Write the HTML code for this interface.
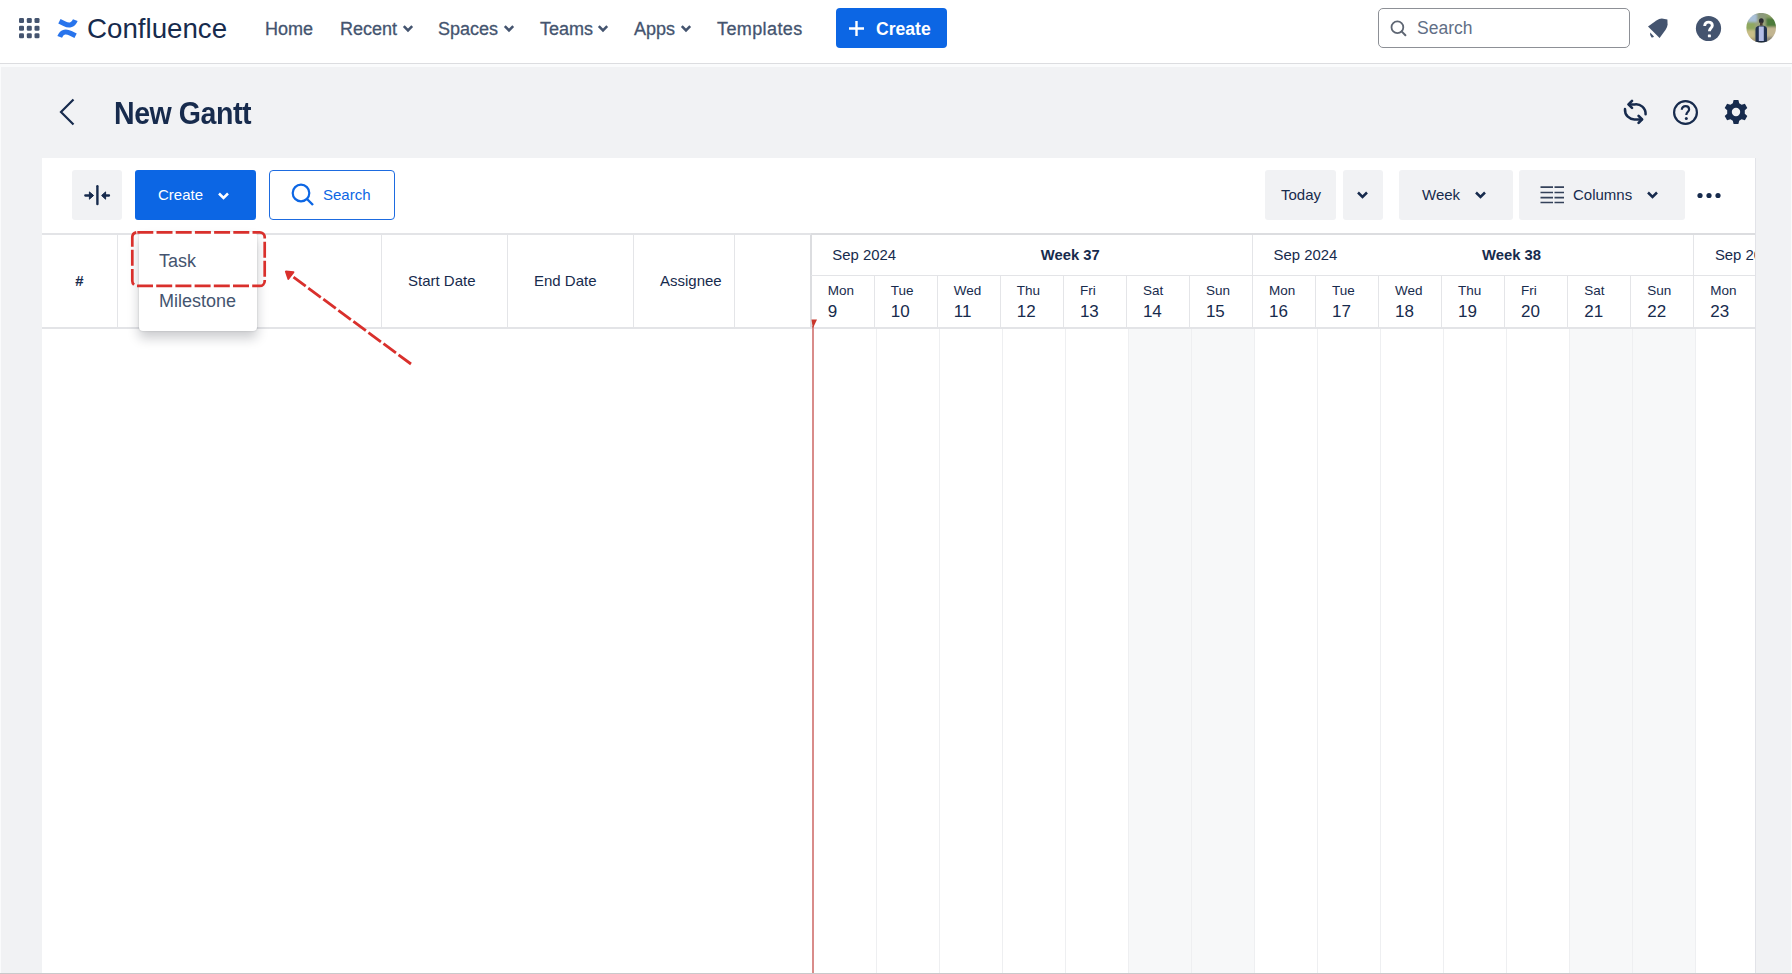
<!DOCTYPE html>
<html><head><meta charset="utf-8">
<style>
*{margin:0;padding:0;box-sizing:border-box}
html,body{width:1792px;height:974px;overflow:hidden;background:#f1f2f4;font-family:"Liberation Sans",sans-serif;color:#172b4d}
.abs{position:absolute}
.t{position:absolute;white-space:nowrap;line-height:1}
#hdr{position:absolute;left:0;top:0;width:1792px;height:63px;background:#fff}
#hdrb{position:absolute;left:0;top:63px;width:1792px;height:1px;background:#dcdde0}
#hdrw{position:absolute;left:0;top:64px;width:1792px;height:3px;background:#fafbfc}
#ledge{position:absolute;left:0;top:64px;width:1px;height:910px;background:#fafbfc}
#redge{position:absolute;left:1791px;top:64px;width:1px;height:910px;background:#fafbfc}
.nav{font-size:18px;color:#44546f;top:19.5px!important;-webkit-text-stroke:0.3px #44546f}
#panel{position:absolute;left:42px;top:158px;width:1713px;height:816px;background:#fff}
#pedge{position:absolute;left:1755px;top:158px;width:1px;height:816px;background:#e2e3e8}
.gbtn{position:absolute;background:#f1f2f4;border-radius:3px;top:170px;height:50px}
.hl{position:absolute;background:#dfe1e4}
.vl{position:absolute;background:#e4e5e8}
.bl{position:absolute;background:#eeeff1;width:1px}
.day{font-size:13.5px;color:#172b4d}
.num{font-size:17px;color:#172b4d}
</style></head><body>
<div id="hdr"></div><div id="hdrb"></div><div id="hdrw"></div>
<div id="ledge"></div><div id="redge"></div>

<!-- apps grid -->
<svg class="abs" style="left:18px;top:17px" width="24" height="24" viewBox="0 0 24 24">
<g fill="#44546f">
<rect x="1" y="1" width="5" height="5" rx="1.3"/><rect x="8.8" y="1" width="5" height="5" rx="1.3"/><rect x="16.5" y="1" width="5" height="5" rx="1.3"/>
<rect x="1" y="8.8" width="5" height="5" rx="1.3"/><rect x="8.8" y="8.8" width="5" height="5" rx="1.3"/><rect x="16.5" y="8.8" width="5" height="5" rx="1.3"/>
<rect x="1" y="16.3" width="5" height="5" rx="1.3"/><rect x="8.8" y="16.3" width="5" height="5" rx="1.3"/><rect x="16.5" y="16.3" width="5" height="5" rx="1.3"/>
</g></svg>
<!-- confluence logo -->
<svg class="abs" style="left:56px;top:17px" width="24" height="24" viewBox="0 0 24 24">
<g fill="none" stroke="#2874ec" stroke-width="5">
<path d="M3.4 4.2 L8.5 6.8 C12.5 8.8 17 9 19.3 3.1"/>
<path d="M19.6 18.8 L14.5 16.2 C10.5 14.2 6 14 3.7 19.9"/>
</g></svg>
<div class="t" style="left:87px;top:14.5px;font-size:27.7px;color:#172b4d">Confluence</div>

<div class="t nav" style="left:265px;top:19px">Home</div>
<div class="t nav" style="left:340px;top:19px">Recent</div>
<div class="t nav" style="left:438px;top:19px">Spaces</div>
<div class="t nav" style="left:540px;top:19px">Teams</div>
<div class="t nav" style="left:634px;top:19px">Apps</div>
<div class="t nav" style="left:717px;top:19px;letter-spacing:0.4px">Templates</div>
<svg class="abs" style="left:402px;top:24px" width="12" height="9" viewBox="0 0 12 9"><path d="M1.8 2.2 L6 6.4 L10.2 2.2" fill="none" stroke="#44546f" stroke-width="2.6"/></svg>
<svg class="abs" style="left:503px;top:24px" width="12" height="9" viewBox="0 0 12 9"><path d="M1.8 2.2 L6 6.4 L10.2 2.2" fill="none" stroke="#44546f" stroke-width="2.6"/></svg>
<svg class="abs" style="left:597px;top:24px" width="12" height="9" viewBox="0 0 12 9"><path d="M1.8 2.2 L6 6.4 L10.2 2.2" fill="none" stroke="#44546f" stroke-width="2.6"/></svg>
<svg class="abs" style="left:680px;top:24px" width="12" height="9" viewBox="0 0 12 9"><path d="M1.8 2.2 L6 6.4 L10.2 2.2" fill="none" stroke="#44546f" stroke-width="2.6"/></svg>

<!-- create -->
<div class="abs" style="left:836px;top:8px;width:111px;height:40px;background:#0c66e4;border-radius:4px"></div>
<svg class="abs" style="left:848px;top:20px" width="17" height="17" viewBox="0 0 17 17"><path d="M8.5 1 V16 M1 8.5 H16" stroke="#fff" stroke-width="2.4"/></svg>
<div class="t" style="left:876px;top:20.5px;font-size:17.6px;font-weight:bold;color:#fff">Create</div>

<!-- search -->
<div class="abs" style="left:1378px;top:8px;width:252px;height:40px;border:1.5px solid #8d9096;border-radius:5px;background:#fff"></div>
<svg class="abs" style="left:1389px;top:19px" width="19" height="19" viewBox="0 0 19 19"><circle cx="8.4" cy="8.2" r="5.9" fill="none" stroke="#5e6673" stroke-width="1.8"/><path d="M12.6 12.4 L16.4 16.2" stroke="#5e6673" stroke-width="2" stroke-linecap="round"/></svg>
<div class="t" style="left:1417px;top:19.5px;font-size:17.5px;color:#626f86">Search</div>

<!-- bell -->
<svg class="abs" style="left:1644px;top:15px" width="28" height="26" viewBox="0 0 28 26">
<path fill="#44546f" d="M4 11.6 L15.6 22.9 L21.6 14.8 Q23.4 12 23.6 9.4 L23.4 4.4 L17.8 3.4 Q15.2 3.4 12.4 5.4 Z"/>
<path fill="#44546f" d="M6.2 17.6 L10 21.4 Q8.8 22.8 7.4 22.2 Q5.6 20.6 6.2 17.6Z"/>
</svg>
<!-- help -->
<svg class="abs" style="left:1695px;top:15px" width="27" height="27" viewBox="0 0 27 27">
<circle cx="13.5" cy="13.5" r="12.6" fill="#44546f"/>
<path d="M9.7 11 C9.7 8.4 11.4 7.1 13.5 7.1 C15.8 7.1 17.3 8.6 17.3 10.5 C17.3 12.9 14.4 13.3 14.4 16.3" fill="none" stroke="#fff" stroke-width="2.9"/>
<rect x="12.9" y="19.4" width="3" height="2.9" rx="0.6" fill="#fff"/>
</svg>
<!-- avatar -->
<svg class="abs" style="left:1746px;top:13px" width="31" height="31" viewBox="0 0 31 31">
<defs><clipPath id="av"><circle cx="15.2" cy="14.7" r="14.8"/></clipPath>
<filter id="blr" x="-20%" y="-20%" width="140%" height="140%"><feGaussianBlur stdDeviation="1.3"/></filter>
<filter id="blr2"><feGaussianBlur stdDeviation="0.5"/></filter></defs>
<g clip-path="url(#av)">
<g filter="url(#blr)">
<rect x="-3" y="-3" width="37" height="37" fill="#9aa27a"/>
<rect x="2" y="1" width="9" height="8" fill="#a9c0d8"/>
<rect x="-3" y="9" width="12" height="8" fill="#8fa85e"/>
<rect x="-3" y="17" width="12" height="9" fill="#c8bd86"/>
<rect x="-2" y="25" width="14" height="8" fill="#a89a72"/>
<rect x="11" y="-3" width="10" height="10" fill="#8c9a7c"/>
<rect x="20" y="-3" width="14" height="8" fill="#8fa26a"/>
<rect x="20" y="5" width="14" height="9" fill="#4d7a3a"/>
<rect x="20" y="14" width="14" height="10" fill="#c2b591"/>
<rect x="19" y="24" width="14" height="9" fill="#8a8678"/>
</g>
<g filter="url(#blr2)">
<path d="M9.5 31 V16 C9.5 14 11.5 12.5 15.3 12.5 C19 12.5 21 14 21 16 V31Z" fill="#243350"/>
<path d="M12.8 13.5 H17.8 V30 H12.8Z" fill="#b5bee6"/>
<rect x="9.5" y="28" width="12" height="4" fill="#1f2a40"/>
<ellipse cx="15.3" cy="7.8" rx="2.4" ry="2.6" fill="#2a2a30"/>
<rect x="14" y="9.5" width="2.6" height="3" fill="#4a3a30"/>
</g>
</g></svg>
<!-- page title -->
<svg class="abs" style="left:57px;top:97px" width="20" height="30" viewBox="0 0 20 30"><path d="M16.5 2.5 L4 15 L16.5 27.5" fill="none" stroke="#172b4d" stroke-width="2.2"/></svg>
<div class="t" style="left:114px;top:97.5px;font-size:31.5px;font-weight:bold;letter-spacing:-0.5px;transform:scaleX(0.906);transform-origin:0 0;color:#172b4d">New Gantt</div>

<!-- sync -->
<svg class="abs" style="left:1621px;top:98px" width="28" height="28" viewBox="0 0 28 28">
<g fill="none" stroke="#172b4d" stroke-width="2.5" stroke-linecap="round" stroke-linejoin="round">
<path d="M8 6.4 H13.5 A9.6 9.6 0 0 1 24.6 16.2"/>
<path d="M4 11 A9.6 9.6 0 0 0 14.5 21.4 H20.5"/>
<path d="M11 2.9 L7.5 6.4 L11 9.9" stroke-width="2.7"/>
<path d="M17.6 17.9 L21.1 21.4 L17.6 24.9" stroke-width="2.7"/>
</g></svg>
<!-- help outline -->
<svg class="abs" style="left:1672px;top:99px" width="27" height="27" viewBox="0 0 27 27">
<circle cx="13.5" cy="13.5" r="11.4" fill="none" stroke="#172b4d" stroke-width="2.2"/>
<path d="M9.8 10.8 C9.8 8.5 11.5 7.1 13.5 7.1 C15.6 7.1 17.1 8.5 17.1 10.4 C17.1 12.6 14.3 13 14.3 16" fill="none" stroke="#172b4d" stroke-width="2.2"/>
<circle cx="14.3" cy="19.5" r="1.5" fill="#172b4d"/>
</svg>
<!-- gear -->
<svg class="abs" style="left:1722px;top:98px" width="28" height="28" viewBox="0 0 28 28">
<path fill="#172b4d" fill-rule="evenodd" d="M11.6 2 H16.4 L17.2 5.3 L19.6 6.7 L22.9 5.7 L25.3 9.9 L22.8 12.2 V15.8 L25.3 18.1 L22.9 22.3 L19.6 21.3 L17.2 22.7 L16.4 26 H11.6 L10.8 22.7 L8.4 21.3 L5.1 22.3 L2.7 18.1 L5.2 15.8 V12.2 L2.7 9.9 L5.1 5.7 L8.4 6.7 L10.8 5.3 Z M14 9.8 A4.2 4.2 0 1 0 14 18.2 A4.2 4.2 0 1 0 14 9.8Z"/>
</svg>

<!-- panel -->
<div id="panel"></div><div id="pedge"></div>

<!-- toolbar left -->
<div class="gbtn" style="left:72px;width:50px"></div>
<svg class="abs" style="left:83px;top:184px" width="28" height="23" viewBox="0 0 28 23">
<g fill="#172b4d" stroke="#172b4d">
<path d="M14.4 2.2 V20" stroke-width="2.4" stroke-linecap="round"/>
<path d="M2.3 11.5 H8" stroke-width="2.3" stroke-linecap="round"/><path d="M6.4 7.9 L10.6 11.5 L6.4 15.2 Z" stroke-width="1" stroke-linejoin="round"/>
<path d="M26 11.5 H21" stroke-width="2.3" stroke-linecap="round"/><path d="M22.6 7.9 L18.6 11.5 L22.6 15.2 Z" stroke-width="1" stroke-linejoin="round"/>
</g></svg>
<div class="abs" style="left:135px;top:170px;width:121px;height:50px;background:#0c66e4;border-radius:3px"></div>
<div class="t" style="left:158px;top:187px;font-size:15px;color:#fff">Create</div>
<svg class="abs" style="left:217px;top:191px" width="13" height="10" viewBox="0 0 13 10"><path d="M2 2.5 L6.5 7 L11 2.5" fill="none" stroke="#fff" stroke-width="2.5"/></svg>

<div class="abs" style="left:269px;top:170px;width:126px;height:50px;border:1.2px solid #1d6be0;border-radius:4px"></div>
<svg class="abs" style="left:289px;top:181px" width="27" height="27" viewBox="0 0 27 27"><circle cx="12" cy="12" r="8.3" fill="none" stroke="#0c66e4" stroke-width="2.2"/><path d="M18 18 L24 24" stroke="#0c66e4" stroke-width="2.4"/></svg>
<div class="t" style="left:323px;top:187px;font-size:15px;color:#0c66e4">Search</div>

<!-- toolbar right -->
<div class="gbtn" style="left:1265px;width:71px"></div>
<div class="t" style="left:1281px;top:187px;font-size:15px">Today</div>
<div class="gbtn" style="left:1343px;width:40px"></div>
<svg class="abs" style="left:1356px;top:190px" width="13" height="10" viewBox="0 0 13 10"><path d="M2 2.5 L6.5 7 L11 2.5" fill="none" stroke="#172b4d" stroke-width="2.5"/></svg>
<div class="gbtn" style="left:1399px;width:114px"></div>
<div class="t" style="left:1422px;top:187px;font-size:15px">Week</div>
<svg class="abs" style="left:1474px;top:190px" width="13" height="10" viewBox="0 0 13 10"><path d="M2 2.5 L6.5 7 L11 2.5" fill="none" stroke="#172b4d" stroke-width="2.5"/></svg>
<div class="gbtn" style="left:1519px;width:166px"></div>
<svg class="abs" style="left:1540px;top:185px" width="25" height="20" viewBox="0 0 25 20">
<g stroke="#34425a" stroke-width="1.7"><path d="M0.5 2.2 H13 M0.5 7.5 H13 M0.5 12.7 H13 M0.5 17.5 H13 M14.5 2.2 H24 M14.5 7.5 H24 M14.5 12.7 H24 M14.5 17.5 H24"/></g></svg>
<div class="t" style="left:1573px;top:187px;font-size:15px">Columns</div>
<svg class="abs" style="left:1646px;top:190px" width="13" height="10" viewBox="0 0 13 10"><path d="M2 2.5 L6.5 7 L11 2.5" fill="none" stroke="#172b4d" stroke-width="2.5"/></svg>
<svg class="abs" style="left:1696px;top:191px" width="27" height="9" viewBox="0 0 27 9"><g fill="#172b4d"><circle cx="4" cy="4.5" r="2.6"/><circle cx="13" cy="4.5" r="2.6"/><circle cx="22" cy="4.5" r="2.6"/></g></svg>

<!-- table header -->
<div class="hl" style="left:42px;top:233px;width:769px;height:2px;background:#e3e4e7"></div>
<div class="hl" style="left:811px;top:233px;width:944px;height:2px;background:#dcdde0"></div>
<div class="hl" style="left:42px;top:327px;width:1713px;height:2px;background:#e3e4e7"></div>
<div class="vl" style="left:117px;top:235px;width:1px;height:92px"></div>
<div class="vl" style="left:381px;top:235px;width:1px;height:92px"></div>
<div class="vl" style="left:507px;top:235px;width:1px;height:92px"></div>
<div class="vl" style="left:633px;top:235px;width:1px;height:92px"></div>
<div class="vl" style="left:734px;top:235px;width:1px;height:92px"></div>
<div class="vl" style="left:810px;top:235px;width:2px;height:92px;background:#dcdde0"></div>
<div class="t" style="left:75px;top:273px;font-size:15px;font-weight:bold;font-style:italic">#</div>
<div class="t" style="left:408px;top:273px;font-size:15px">Start Date</div>
<div class="t" style="left:534px;top:273px;font-size:15px">End Date</div>
<div class="t" style="left:660px;top:273px;font-size:15px">Assignee</div>

<div id="gantt"><div class="abs" style="left:0;top:0;width:1755px;height:974px;overflow:hidden"><div class="abs" style="left:1127.5px;top:329px;width:63.04px;height:645px;background:#f7f8f9"></div>
<div class="abs" style="left:1190.5px;top:329px;width:63.04px;height:645px;background:#f7f8f9"></div>
<div class="abs" style="left:1568.8px;top:329px;width:63.04px;height:645px;background:#f7f8f9"></div>
<div class="abs" style="left:1631.8px;top:329px;width:63.04px;height:645px;background:#f7f8f9"></div>
<div class="bl" style="left:875.5px;top:329px;height:645px"></div>
<div class="bl" style="left:938.6px;top:329px;height:645px"></div>
<div class="bl" style="left:1001.6px;top:329px;height:645px"></div>
<div class="bl" style="left:1064.7px;top:329px;height:645px"></div>
<div class="bl" style="left:1127.7px;top:329px;height:645px"></div>
<div class="bl" style="left:1190.7px;top:329px;height:645px"></div>
<div class="bl" style="left:1253.8px;top:329px;height:645px"></div>
<div class="bl" style="left:1316.8px;top:329px;height:645px"></div>
<div class="bl" style="left:1379.9px;top:329px;height:645px"></div>
<div class="bl" style="left:1442.9px;top:329px;height:645px"></div>
<div class="bl" style="left:1505.9px;top:329px;height:645px"></div>
<div class="bl" style="left:1569.0px;top:329px;height:645px"></div>
<div class="bl" style="left:1632.0px;top:329px;height:645px"></div>
<div class="bl" style="left:1695.1px;top:329px;height:645px"></div>
<div class="vl" style="left:873.8px;top:275px;width:1px;height:52px"></div>
<div class="vl" style="left:936.9px;top:275px;width:1px;height:52px"></div>
<div class="vl" style="left:999.9px;top:275px;width:1px;height:52px"></div>
<div class="vl" style="left:1063.0px;top:275px;width:1px;height:52px"></div>
<div class="vl" style="left:1126.0px;top:275px;width:1px;height:52px"></div>
<div class="vl" style="left:1189.0px;top:275px;width:1px;height:52px"></div>
<div class="vl" style="left:1252.1px;top:235px;width:1px;height:92px"></div>
<div class="vl" style="left:1315.1px;top:275px;width:1px;height:52px"></div>
<div class="vl" style="left:1378.2px;top:275px;width:1px;height:52px"></div>
<div class="vl" style="left:1441.2px;top:275px;width:1px;height:52px"></div>
<div class="vl" style="left:1504.2px;top:275px;width:1px;height:52px"></div>
<div class="vl" style="left:1567.3px;top:275px;width:1px;height:52px"></div>
<div class="vl" style="left:1630.3px;top:275px;width:1px;height:52px"></div>
<div class="vl" style="left:1693.4px;top:235px;width:1px;height:92px"></div>
<div class="hl" style="left:811px;top:275px;width:944px;height:1px;background:#e3e4e7"></div>
<div class="t day" style="left:827.7px;top:284px">Mon</div>
<div class="t num" style="left:827.7px;top:303px">9</div>
<div class="t day" style="left:890.7px;top:284px">Tue</div>
<div class="t num" style="left:890.7px;top:303px">10</div>
<div class="t day" style="left:953.8px;top:284px">Wed</div>
<div class="t num" style="left:953.8px;top:303px">11</div>
<div class="t day" style="left:1016.8px;top:284px">Thu</div>
<div class="t num" style="left:1016.8px;top:303px">12</div>
<div class="t day" style="left:1079.9px;top:284px">Fri</div>
<div class="t num" style="left:1079.9px;top:303px">13</div>
<div class="t day" style="left:1142.9px;top:284px">Sat</div>
<div class="t num" style="left:1142.9px;top:303px">14</div>
<div class="t day" style="left:1205.9px;top:284px">Sun</div>
<div class="t num" style="left:1205.9px;top:303px">15</div>
<div class="t day" style="left:1269.0px;top:284px">Mon</div>
<div class="t num" style="left:1269.0px;top:303px">16</div>
<div class="t day" style="left:1332.0px;top:284px">Tue</div>
<div class="t num" style="left:1332.0px;top:303px">17</div>
<div class="t day" style="left:1395.1px;top:284px">Wed</div>
<div class="t num" style="left:1395.1px;top:303px">18</div>
<div class="t day" style="left:1458.1px;top:284px">Thu</div>
<div class="t num" style="left:1458.1px;top:303px">19</div>
<div class="t day" style="left:1521.1px;top:284px">Fri</div>
<div class="t num" style="left:1521.1px;top:303px">20</div>
<div class="t day" style="left:1584.2px;top:284px">Sat</div>
<div class="t num" style="left:1584.2px;top:303px">21</div>
<div class="t day" style="left:1647.2px;top:284px">Sun</div>
<div class="t num" style="left:1647.2px;top:303px">22</div>
<div class="t day" style="left:1710.3px;top:284px">Mon</div>
<div class="t num" style="left:1710.3px;top:303px">23</div>
<div class="t" style="left:832.3px;top:248px;font-size:14.9px">Sep 2024</div>
<div class="t" style="left:1273.6px;top:248px;font-size:14.9px">Sep 2024</div>
<div class="t" style="left:1714.9px;top:248px;font-size:14.9px">Sep 2024</div>
<div class="t" style="left:1040.8px;top:248px;font-size:14.8px;font-weight:bold">Week 37</div>
<div class="t" style="left:1482.1px;top:248px;font-size:14.8px;font-weight:bold">Week 38</div>
<div class="abs" style="left:812px;top:326px;width:2px;height:648px;background:#d98c8a"></div>
<svg class="abs" style="left:811px;top:319px" width="7" height="10" viewBox="0 0 7 10"><path d="M0.5 0.5 H6 L1.8 9.5 Z" fill="#c9372c"/></svg></div></div><!--/gantt-->

<!-- dropdown -->
<div class="abs" style="left:139px;top:232px;width:118px;height:99px;background:#fff;border-radius:4px;box-shadow:0 7px 12px rgba(20,25,35,0.22),0 0 2px rgba(20,25,35,0.2)"></div>
<div class="t" style="left:159px;top:251.5px;font-size:18px;color:#44546f">Task</div>
<div class="t" style="left:159px;top:292px;font-size:18px;color:#44546f">Milestone</div>

<!-- annotation -->
<svg class="abs" style="left:0;top:0" width="1792" height="974" viewBox="0 0 1792 974">
<rect x="132.3" y="232.3" width="132.4" height="53.6" rx="5" fill="none" stroke="#d9302c" stroke-width="2.7" stroke-dasharray="16 3.2"/>
<path d="M411 364 L293.5 277.2" fill="none" stroke="#d9302c" stroke-width="2.8" stroke-dasharray="15.5 3.2"/>
<path d="M285.8 271.5 L293.5 272.2 L288.3 279 Z" fill="#d9302c" stroke="#d9302c" stroke-width="1.8" stroke-linejoin="round"/>
</svg>
<div class="abs" style="left:0;top:973px;width:1792px;height:1px;background:#c9c9cb"></div>
</body></html>
